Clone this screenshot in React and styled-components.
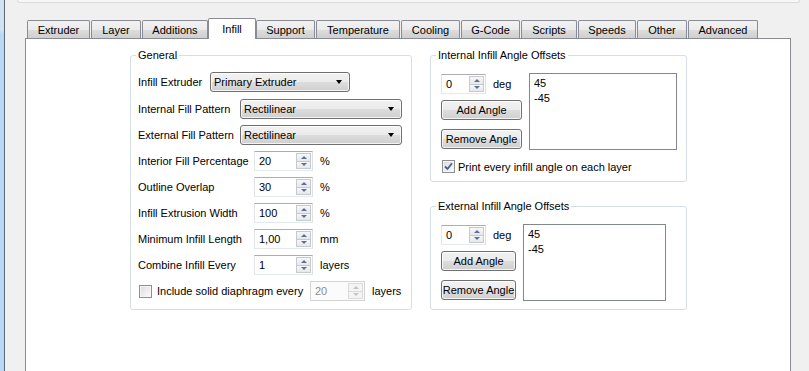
import React from "react";
import styled, { createGlobalStyle, css } from "styled-components";

const GlobalStyle = createGlobalStyle`
  html, body {
    margin: 0;
    padding: 0;
  }
  body {
    background: #f0f0f0;
    font-family: "Liberation Sans", Arial, sans-serif;
    font-size: 11px;
    color: #000;
  }
  * {
    box-sizing: border-box;
  }
`;

const tabs = [
  { name: "Extruder", width: 63 },
  { name: "Layer", width: 50 },
  { name: "Additions", width: 66 },
  { name: "Infill", width: 46, active: true },
  { name: "Support", width: 59 },
  { name: "Temperature", width: 84 },
  { name: "Cooling", width: 59 },
  { name: "G-Code", width: 59 },
  { name: "Scripts", width: 56 },
  { name: "Speeds", width: 58 },
  { name: "Other", width: 50 },
  { name: "Advanced", width: 70 },
];

const spinRows = [
  { label: "Interior Fill Percentage", value: "20", unit: "%" },
  { label: "Outline Overlap", value: "30", unit: "%" },
  { label: "Infill Extrusion Width", value: "100", unit: "%" },
  { label: "Minimum Infill Length", value: "1,00", unit: "mm" },
  { label: "Combine Infill Every", value: "1", unit: "layers" },
];

const winGradient = "linear-gradient(#f2f2f2 0%, #ebebeb 50%, #dddddd 51%, #cfcfcf 100%)";

export default function App() {
  return (
    <>
      <GlobalStyle />
      <Page>
        <WindowEdge />
        <Main>
          <TopFrame />
          <TabBar>
            {tabs.map((t) => (
              <Tab key={t.name} $width={t.width} $active={t.active}>
                {t.name}
              </Tab>
            ))}
          </TabBar>
          <Pane>
            <PaneBody>
              <GroupBox $width={282}>
                <Legend>General</Legend>
                <GeneralBody>
                  <Row $mb={1}>
                    <Label $width={72}>Infill Extruder</Label>
                    <Combo $width={140}>Primary Extruder</Combo>
                  </Row>
                  <Row>
                    <Label $width={102}>Internal Fill Pattern</Label>
                    <Combo>Rectilinear</Combo>
                  </Row>
                  <Row>
                    <Label $width={102}>External Fill Pattern</Label>
                    <Combo>Rectilinear</Combo>
                  </Row>
                  {spinRows.map((r) => (
                    <Row key={r.label}>
                      <Label $width={116}>{r.label}</Label>
                      <SpinBox value={r.value} width={59} />
                      <Unit>{r.unit}</Unit>
                    </Row>
                  ))}
                  <Row>
                    <CheckBox />
                    <Label $width={153} $ml={5}>
                      Include solid diaphragm every
                    </Label>
                    <SpinBox value="20" width={55} disabled />
                    <Unit>layers</Unit>
                  </Row>
                </GeneralBody>
              </GroupBox>
              <RightColumn>
                <GroupBox $width={257}>
                  <Legend>Internal Infill Angle Offsets</Legend>
                  <AngleBody>
                    <AngleRow>
                      <AngleControls $width={81}>
                        <Row>
                          <SpinBox value="0" width={45} />
                          <Unit>deg</Unit>
                        </Row>
                        <Button>Add Angle</Button>
                        <Button $mt={9}>Remove Angle</Button>
                      </AngleControls>
                      <ListBox $width={148}>
                        <ListItem>45</ListItem>
                        <ListItem>-45</ListItem>
                      </ListBox>
                    </AngleRow>
                    <CheckRow>
                      <CheckBox checked />
                      <Label $ml={3}>Print every infill angle on each layer</Label>
                    </CheckRow>
                  </AngleBody>
                </GroupBox>
                <GroupBox $width={257}>
                  <Legend>External Infill Angle Offsets</Legend>
                  <AngleBody>
                    <AngleRow>
                      <AngleControls $width={75}>
                        <Row>
                          <SpinBox value="0" width={45} />
                          <Unit>deg</Unit>
                        </Row>
                        <Button>Add Angle</Button>
                        <Button $mt={9}>Remove Angle</Button>
                      </AngleControls>
                      <ListBox $width={143}>
                        <ListItem>45</ListItem>
                        <ListItem>-45</ListItem>
                      </ListBox>
                    </AngleRow>
                  </AngleBody>
                </GroupBox>
              </RightColumn>
            </PaneBody>
          </Pane>
        </Main>
      </Page>
    </>
  );
}

function SpinBox({ value, width, disabled }) {
  return (
    <Spin $width={width} $disabled={disabled}>
      <SpinText>{value}</SpinText>
      <SpinButtons>
        <SpinButton $disabled={disabled}>
          <SpinArrow $up $disabled={disabled} />
        </SpinButton>
        <SpinButton $disabled={disabled}>
          <SpinArrow $disabled={disabled} />
        </SpinButton>
      </SpinButtons>
    </Spin>
  );
}

function Combo({ children, $width }) {
  return (
    <ComboBox $width={$width}>
      <ComboText>{children}</ComboText>
      <ComboArrow />
    </ComboBox>
  );
}

function CheckBox({ checked }) {
  return (
    <Check>
      {checked && (
        <svg width="9" height="9" viewBox="0 0 9 9">
          <path d="M1 4.5 L3.5 7 L8 1.2" fill="none" stroke="#4a5e94" strokeWidth="1.8" />
        </svg>
      )}
    </Check>
  );
}

const Page = styled.div`
  display: flex;
  height: 371px;
  overflow: hidden;
`;

const WindowEdge = styled.div`
  flex: none;
  width: 5px;
  background: linear-gradient(#d3e2f0 0, #d3e2f0 30px, #b9d8f5 34px, #b9d8f5 100%);
  border-right: 1px solid #5c6876;
`;

const Main = styled.div`
  flex: 1;
  min-width: 0;
  display: flex;
  flex-direction: column;
  padding: 0 18px 0 20px;
`;

const TopFrame = styled.div`
  flex: none;
  height: 3px;
  margin: 0 -9px 15px -8px;
  background: #f7f7f7;
  border: 1px solid #dadada;
  border-top: none;
  border-radius: 0 0 3px 3px;
`;

const TabBar = styled.div`
  flex: none;
  display: flex;
  align-items: flex-end;
  height: 20px;
  padding-left: 2px;
  position: relative;
  z-index: 2;
`;

const Tab = styled.div`
  flex: none;
  width: ${(p) => p.$width}px;
  height: 18px;
  margin-right: 1px;
  border: 1px solid #898c95;
  border-bottom: none;
  border-radius: 2px 2px 0 0;
  background: ${winGradient};
  text-align: center;
  line-height: 19px;
  ${(p) =>
    p.$active &&
    css`
      width: ${p.$width + 2}px;
      height: 21px;
      margin: 0 0 -1px -1px;
      background: #fff;
      line-height: 20px;
    `}
`;

const Pane = styled.div`
  flex: none;
  height: 345px;
  background: #fff;
  border: 1px solid #898c95;
  position: relative;
  z-index: 1;
`;

const PaneBody = styled.div`
  display: flex;
  align-items: flex-start;
  gap: 18px;
  padding: 10px 0 0 104px;
`;

const GroupBox = styled.fieldset`
  width: ${(p) => p.$width}px;
  min-width: 0;
  margin: 0;
  padding: 0;
  border: 1px solid #d5dfe5;
  border-radius: 3px;
`;

const Legend = styled.legend`
  margin-left: 5px;
  padding: 0 2px;
  line-height: 13px;
  font-size: 11px;
`;

const GeneralBody = styled.div`
  display: flex;
  flex-direction: column;
  gap: 6px;
  padding: 10px 9px 8px 7px;
`;

const Row = styled.div`
  display: flex;
  align-items: center;
  height: 20px;
  margin-bottom: ${(p) => p.$mb || 0}px;
`;

const Label = styled.span`
  flex: none;
  width: ${(p) => (p.$width ? `${p.$width}px` : "auto")};
  margin-left: ${(p) => p.$ml || 0}px;
  white-space: nowrap;
`;

const Unit = styled.span`
  margin-left: 7px;
  white-space: nowrap;
`;

const ComboBox = styled.div`
  display: flex;
  align-items: center;
  height: 20px;
  ${(p) => (p.$width ? `width: ${p.$width}px; flex: none;` : "flex: 1;")}
  border: 1px solid #707070;
  border-radius: 3px;
  background: ${winGradient};
  box-shadow: inset 0 0 0 1px rgba(255, 255, 255, 0.75);
  padding: 0 5px 0 3px;
`;

const ComboText = styled.span`
  flex: 1;
  white-space: nowrap;
`;

const ComboArrow = styled.span`
  width: 0;
  height: 0;
  border-left: 3.5px solid transparent;
  border-right: 3.5px solid transparent;
  border-top: 4px solid #000;
  margin-right: 2px;
`;

const Spin = styled.div`
  flex: none;
  display: flex;
  width: ${(p) => p.$width}px;
  height: 20px;
  border: 1px solid;
  border-color: #abadb3 #dbdfe6 #e3e9ef #e2e3ea;
  background: #fff;
  color: ${(p) => (p.$disabled ? "#8d8d8d" : "#000")};
  ${(p) =>
    p.$disabled &&
    css`
      border-color: #d3d3d3;
      background: #fbfbfb;
    `}
`;

const SpinText = styled.span`
  flex: 1;
  padding-left: 4px;
  line-height: 18px;
`;

const SpinButtons = styled.div`
  display: flex;
  flex-direction: column;
  width: 16px;
  padding: 1px 1px 1px 0;
`;

const SpinButton = styled.div`
  flex: 1;
  display: flex;
  align-items: center;
  justify-content: center;
  border: 1px solid ${(p) => (p.$disabled ? "#dadada" : "#c6c9ce")};
  background: ${(p) =>
    p.$disabled ? "#f4f4f4" : "linear-gradient(#f7f7f7, #e8e8e8)"};
  & + & {
    margin-top: -1px;
  }
`;

const SpinArrow = styled.span`
  width: 0;
  height: 0;
  border-left: 3px solid transparent;
  border-right: 3px solid transparent;
  ${(p) =>
    p.$up
      ? css`border-bottom: 3px solid ${p.$disabled ? "#c4c4c4" : "#5a6e9f"};`
      : css`border-top: 3px solid ${p.$disabled ? "#c4c4c4" : "#5a6e9f"};`}
`;

const Check = styled.span`
  flex: none;
  display: flex;
  align-items: center;
  justify-content: center;
  width: 13px;
  height: 13px;
  margin-left: 1px;
  border: 1px solid #8e8f8f;
  background: linear-gradient(135deg, #dcdcdc, #fbfbfb);
  box-shadow: inset 0 0 0 1px #f4f4f4;
`;

const RightColumn = styled.div`
  display: flex;
  flex-direction: column;
  gap: 18px;
`;

const AngleBody = styled.div`
  display: flex;
  flex-direction: column;
  padding: 11px 9px 8px 10px;
`;

const AngleRow = styled.div`
  display: flex;
  gap: 7px;
  align-items: flex-start;
`;

const AngleControls = styled.div`
  flex: none;
  display: flex;
  flex-direction: column;
  gap: 6px;
  width: ${(p) => p.$width}px;
  margin-top: 1px;
`;

const Button = styled.div`
  height: 20px;
  margin-top: ${(p) => (p.$mt ? p.$mt - 6 : 0)}px;
  border: 1px solid #707070;
  border-radius: 3px;
  background: ${winGradient};
  box-shadow: inset 0 0 0 1px rgba(255, 255, 255, 0.75);
  text-align: center;
  line-height: 18px;
  white-space: nowrap;
`;

const ListBox = styled.div`
  flex: none;
  width: ${(p) => p.$width}px;
  height: 77px;
  border: 1px solid #828790;
  background: #fff;
  padding: 2px 4px;
`;

const ListItem = styled.div`
  line-height: 15px;
`;

const CheckRow = styled.div`
  display: flex;
  align-items: center;
  height: 13px;
  margin-top: 10px;
`;
